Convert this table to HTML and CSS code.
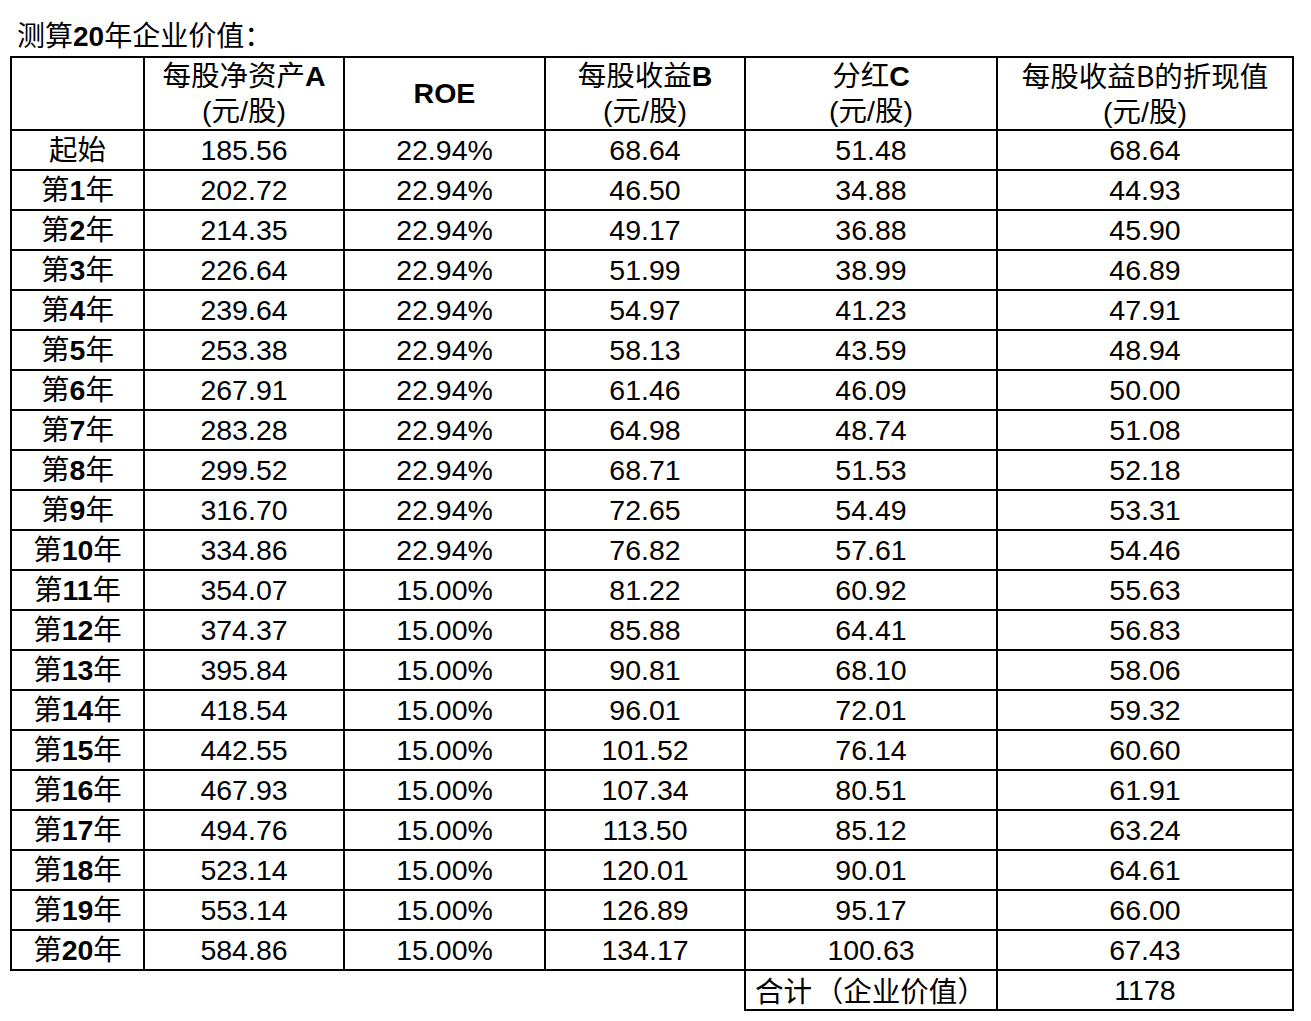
FILE: index.html
```html
<!DOCTYPE html>
<html lang="zh-CN">
<head>
<meta charset="utf-8">
<title>测算20年企业价值</title>
<link rel="stylesheet" href="styles.css">
</head>
<body>
<div class="title">测算<b>20</b>年企业价值：</div>
<table class="valuation">
  <colgroup>
    <col class="c1"><col class="c2"><col class="c3"><col class="c4"><col class="c5"><col class="c6">
  </colgroup>
  <thead>
    <tr class="head">
      <th></th>
      <th>每股净资产<b>A</b><br>(元/股)</th>
      <th><b>ROE</b></th>
      <th>每股收益<b>B</b><br>(元/股)</th>
      <th>分红<b>C</b><br>(元/股)</th>
      <th class="cjk">每股收益B的折现值<br><span class="lat">(元/股)</span></th>
    </tr>
  </thead>
  <tbody>
    <tr><td>起始</td><td>185.56</td><td>22.94%</td><td>68.64</td><td>51.48</td><td>68.64</td></tr>
    <tr><td>第<b>1</b>年</td><td>202.72</td><td>22.94%</td><td>46.50</td><td>34.88</td><td>44.93</td></tr>
    <tr><td>第<b>2</b>年</td><td>214.35</td><td>22.94%</td><td>49.17</td><td>36.88</td><td>45.90</td></tr>
    <tr><td>第<b>3</b>年</td><td>226.64</td><td>22.94%</td><td>51.99</td><td>38.99</td><td>46.89</td></tr>
    <tr><td>第<b>4</b>年</td><td>239.64</td><td>22.94%</td><td>54.97</td><td>41.23</td><td>47.91</td></tr>
    <tr><td>第<b>5</b>年</td><td>253.38</td><td>22.94%</td><td>58.13</td><td>43.59</td><td>48.94</td></tr>
    <tr><td>第<b>6</b>年</td><td>267.91</td><td>22.94%</td><td>61.46</td><td>46.09</td><td>50.00</td></tr>
    <tr><td>第<b>7</b>年</td><td>283.28</td><td>22.94%</td><td>64.98</td><td>48.74</td><td>51.08</td></tr>
    <tr><td>第<b>8</b>年</td><td>299.52</td><td>22.94%</td><td>68.71</td><td>51.53</td><td>52.18</td></tr>
    <tr><td>第<b>9</b>年</td><td>316.70</td><td>22.94%</td><td>72.65</td><td>54.49</td><td>53.31</td></tr>
    <tr><td>第<b>10</b>年</td><td>334.86</td><td>22.94%</td><td>76.82</td><td>57.61</td><td>54.46</td></tr>
    <tr><td>第<b>11</b>年</td><td>354.07</td><td>15.00%</td><td>81.22</td><td>60.92</td><td>55.63</td></tr>
    <tr><td>第<b>12</b>年</td><td>374.37</td><td>15.00%</td><td>85.88</td><td>64.41</td><td>56.83</td></tr>
    <tr><td>第<b>13</b>年</td><td>395.84</td><td>15.00%</td><td>90.81</td><td>68.10</td><td>58.06</td></tr>
    <tr><td>第<b>14</b>年</td><td>418.54</td><td>15.00%</td><td>96.01</td><td>72.01</td><td>59.32</td></tr>
    <tr><td>第<b>15</b>年</td><td>442.55</td><td>15.00%</td><td>101.52</td><td>76.14</td><td>60.60</td></tr>
    <tr><td>第<b>16</b>年</td><td>467.93</td><td>15.00%</td><td>107.34</td><td>80.51</td><td>61.91</td></tr>
    <tr><td>第<b>17</b>年</td><td>494.76</td><td>15.00%</td><td>113.50</td><td>85.12</td><td>63.24</td></tr>
    <tr><td>第<b>18</b>年</td><td>523.14</td><td>15.00%</td><td>120.01</td><td>90.01</td><td>64.61</td></tr>
    <tr><td>第<b>19</b>年</td><td>553.14</td><td>15.00%</td><td>126.89</td><td>95.17</td><td>66.00</td></tr>
    <tr><td>第<b>20</b>年</td><td>584.86</td><td>15.00%</td><td>134.17</td><td>100.63</td><td>67.43</td></tr>
    <tr class="total">
      <td class="blank"></td><td class="blank"></td><td class="blank"></td><td class="blank"></td>
      <td class="label">合计<span class="fw open">（</span>企业价值<span class="fw close">）</span></td><td>1178</td>
    </tr>
  </tbody>
</table>
</body>
</html>
```
FILE: styles.css
```css
html, body {
  margin: 0;
  padding: 0;
  background: #ffffff;
  color: #000000;
}
body {
  font-family: "Liberation Sans", "Noto Sans CJK SC", sans-serif;
  font-size: 28.5px;
}
b {
  font-weight: bold;
}
.title {
  margin: 18px 0 0 17px;
  height: 38px;
  line-height: 38px;
  white-space: nowrap;
  font-size: 28px;
}
.valuation {
  margin-left: 10px;
  border-collapse: collapse;
  table-layout: fixed;
  width: 1282px;
}
.c1 { width: 133px; }
.c2 { width: 200px; }
.c3 { width: 201px; }
.c4 { width: 200px; }
.c5 { width: 252px; }
.c6 { width: 296px; }
.valuation th,
.valuation td {
  border: 2px solid #000000;
  padding: 0;
  text-align: center;
  vertical-align: middle;
  white-space: nowrap;
  font-weight: normal;
}
.valuation td b,
.valuation th b {
  font-weight: bold;
}
.head th {
  height: 69px;
  line-height: 34.5px;
}
.valuation tbody td {
  height: 38px;
  line-height: 38px;
}
.cjk {
  font-family: "Noto Sans CJK SC", sans-serif;
}
.cjk .lat {
  font-family: "Liberation Sans", "Noto Sans CJK SC", sans-serif;
}
.total .blank {
  border: none;
}
.total .label {
  text-align: left;
  padding-left: 9px;
  font-family: "Noto Sans CJK SC", sans-serif;
}
.fw {
  display: inline-block;
  width: 1.1em;
}
.fw.open {
  text-align: right;
}
.fw.close {
  text-align: left;
}
```
